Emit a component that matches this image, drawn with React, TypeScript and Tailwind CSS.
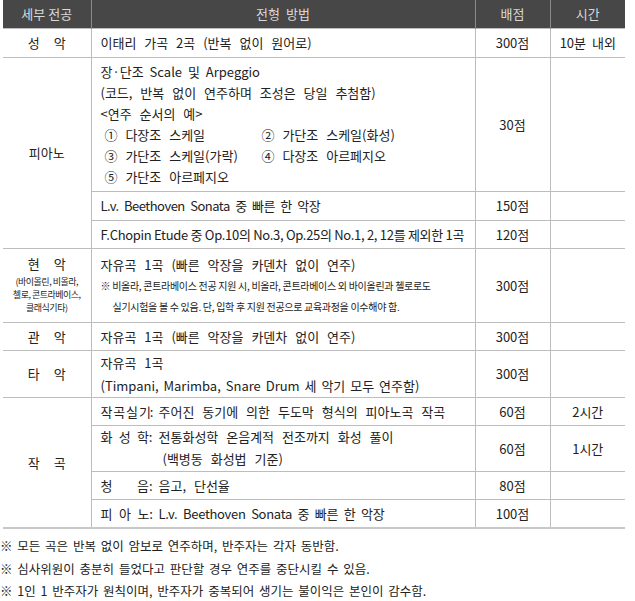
import React from 'react';

const font = { fontFamily: '"Noto Sans CJK KR", "Noto Sans", sans-serif' };

const Label: React.FC<{ chars: string[]; tight?: boolean }> = ({ chars, tight }) => (
  <span className={`inline-flex w-[52px] mr-[6px] justify-between ${tight ? 'tracking-[-1px]' : ''}`} style={{ wordSpacing: 0 }}>
    {chars.map((c, i) => (
      <span key={i}>{c}</span>
    ))}
  </span>
);

const Spaced: React.FC<{ a: string; b: string }> = ({ a, b }) => (
  <div className="flex justify-center gap-[14px]">
    <span>{a}</span>
    <span>{b}</span>
  </div>
);

const td = 'border border-[#bdbdbd] align-middle';
const tdL = `${td} pl-[9px] pr-1 text-left whitespace-nowrap`;
const tdC = `${td} text-center`;
const tdT = `${tdC} border-r-0`;

const App: React.FC = () => {
  return (
    <div className="w-[635px] h-[601px] bg-white text-[#222] text-[13px] leading-[21px]" style={font}>
      <table className="ml-[3px] w-[622px] table-fixed border-collapse">
        <colgroup>
          <col className="w-[88px]" />
          <col className="w-[384px]" />
          <col className="w-[75px]" />
          <col className="w-[75px]" />
        </colgroup>
        <thead>
          <tr className="h-[28px] bg-[#474747] text-[#d8d8d8]">
            <th className="font-normal border-r border-[#8a8a8a]">세부 전공</th>
            <th className="font-normal border-r border-[#8a8a8a] [word-spacing:3px]">전형 방법</th>
            <th className="font-normal border-r border-[#8a8a8a]">배점</th>
            <th className="font-normal">시간</th>
          </tr>
        </thead>
        <tbody>
          <tr className="h-[29px]">
            <td className={`${tdC} border-l-0`}><Spaced a="성" b="악" /></td>
            <td className={`${tdL} [word-spacing:5px]`}>이태리 가곡 2곡 (반복 없이 원어로)</td>
            <td className={tdC}>300점</td>
            <td className={`${tdT} [word-spacing:3px]`}>10분 내외</td>
          </tr>
          <tr className="h-[134px]">
            <td rowSpan={3} className={`${tdC} border-l-0`}>피아노</td>
            <td className={`${tdL} [word-spacing:5px]`}>
              <div className="[word-spacing:3px]">장·단조 Scale 및 Arpeggio</div>
              <div>(코드, 반복 없이 연주하며 조성은 당일 추첨함)</div>
              <div>&lt;연주 순서의 예&gt;</div>
              <div className="grid grid-cols-[157px_1fr] pl-[4px]">
                <span>① 다장조 스케일</span>
                <span>② 가단조 스케일(화성)</span>
                <span>③ 가단조 스케일(가락)</span>
                <span>④ 다장조 아르페지오</span>
                <span>⑤ 가단조 아르페지오</span>
              </div>
            </td>
            <td className={tdC}>30점</td>
            <td className={tdT}></td>
          </tr>
          <tr className="h-[29px]">
            <td className={`${tdL} tracking-[-0.5px] [word-spacing:3px]`}>L.v. Beethoven Sonata 중 빠른 한 악장</td>
            <td className={tdC}>150점</td>
            <td className={tdT}></td>
          </tr>
          <tr className="h-[28px]">
            <td className={`${tdL} tracking-[-0.3px]`}>F.Chopin Etude 중 Op.10의 No.3, Op.25의 No.1, 2, 12를 제외한 1곡</td>
            <td className={tdC}>120점</td>
            <td className={tdT}></td>
          </tr>
          <tr className="h-[74px]">
            <td className={`${tdC} border-l-0`}>
              <Spaced a="현" b="악" />
              <div className="text-[9px] leading-[13px] tracking-[-0.5px] pb-[3px] pt-[1px]">
                (바이올린, 비올라,
                <br />
                첼로, 콘트라베이스,
                <br />
                클래식기타)
              </div>
            </td>
            <td className={tdL}>
              <div className="[word-spacing:5px]">자유곡 1곡 (빠른 악장을 카덴차 없이 연주)</div>
              <div className="text-[10px] leading-[21px] tracking-[-0.3px]">
                ※ 비올라, 콘트라베이스 전공 지원 시, 비올라, 콘트라베이스 외 바이올린과 첼로로도
              </div>
              <div className="text-[10px] leading-[21px] tracking-[-0.3px] pl-[12px]">
                실기시험을 볼 수 있음. 단, 입학 후 지원 전공으로 교육과정을 이수해야 함.
              </div>
            </td>
            <td className={tdC}>300점</td>
            <td className={tdT}></td>
          </tr>
          <tr className="h-[28px]">
            <td className={`${tdC} border-l-0`}><Spaced a="관" b="악" /></td>
            <td className={`${tdL} [word-spacing:5px]`}>자유곡 1곡 (빠른 악장을 카덴차 없이 연주)</td>
            <td className={tdC}>300점</td>
            <td className={tdT}></td>
          </tr>
          <tr className="h-[46px]">
            <td className={`${tdC} border-l-0`}><Spaced a="타" b="악" /></td>
            <td className={`${tdL} leading-[23px]`}>
              <div className="[word-spacing:5px]">자유곡 1곡</div>
              <div className="[word-spacing:2px]">(Timpani, Marimba, Snare Drum 세 악기 모두 연주함)</div>
            </td>
            <td className={tdC}>300점</td>
            <td className={tdT}></td>
          </tr>
          <tr className="h-[28px]">
            <td rowSpan={4} className={`${tdC} border-l-0 border-b-2 border-b-[#c8c8c8]`}>
              <Spaced a="작" b="곡" />
            </td>
            <td className={`${tdL} [word-spacing:5px]`}>
              <Label tight chars={['작', '곡', '실', '기:']} />주어진 동기에 의한 두도막 형식의 피아노곡 작곡
            </td>
            <td className={tdC}>60점</td>
            <td className={tdT}>2시간</td>
          </tr>
          <tr className="h-[46px]">
            <td className={`${tdL} leading-[22px] [word-spacing:5px]`}>
              <div>
                <Label chars={['화', '성', '학:']} />전통화성학 온음계적 전조까지 화성 풀이
              </div>
              <div className="pl-[62px]">(백병동 화성법 기준)</div>
            </td>
            <td className={tdC}>60점</td>
            <td className={tdT}>1시간</td>
          </tr>
          <tr className="h-[28px]">
            <td className={`${tdL} [word-spacing:5px]`}>
              <Label chars={['청', '음:']} />음고, 단선율
            </td>
            <td className={tdC}>80점</td>
            <td className={tdT}></td>
          </tr>
          <tr className="h-[29px]">
            <td className={`${tdL} border-b-2 border-b-[#c8c8c8] tracking-[-0.3px] [word-spacing:3px]`}>
              <Label chars={['피', '아', '노:']} />L.v. Beethoven Sonata 중 빠른 한 악장
            </td>
            <td className={`${tdC} border-b-2 border-b-[#c8c8c8]`}>100점</td>
            <td className={`${tdT} border-b-2 border-b-[#c8c8c8]`}></td>
          </tr>
        </tbody>
      </table>
      <div className="mt-[6px] leading-[22.5px] text-[12.5px] [word-spacing:2px]">
        <div>※ 모든 곡은 반복 없이 암보로 연주하며, 반주자는 각자 동반함.</div>
        <div>※ 심사위원이 충분히 들었다고 판단할 경우 연주를 중단시킬 수 있음.</div>
        <div>※ 1인 1 반주자가 원칙이며, 반주자가 중복되어 생기는 불이익은 본인이 감수함.</div>
      </div>
    </div>
  );
};

export default App;
